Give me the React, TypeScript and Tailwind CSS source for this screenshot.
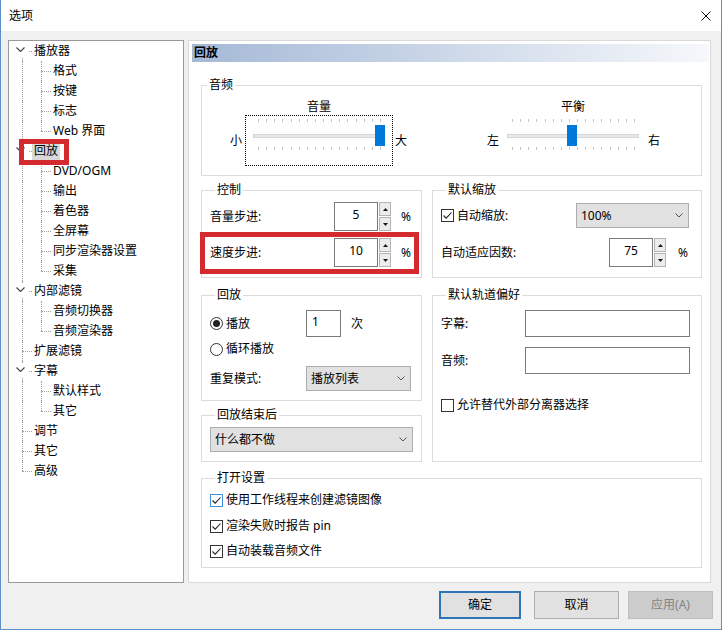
import { clsx } from "clsx";
import type { ReactNode } from "react";

const cn = clsx;

type TreeItem = {
  label: string;
  level: 0 | 1;
  exp?: boolean;
  first?: boolean;
  last?: boolean;
  selected?: boolean;
};

const tree: TreeItem[] = [
  { label: "播放器", level: 0, exp: true, first: true },
  { label: "格式", level: 1 },
  { label: "按键", level: 1 },
  { label: "标志", level: 1 },
  { label: "Web 界面", level: 1, last: true },
  { label: "回放", level: 0, exp: true, selected: true },
  { label: "DVD/OGM", level: 1 },
  { label: "输出", level: 1 },
  { label: "着色器", level: 1 },
  { label: "全屏幕", level: 1 },
  { label: "同步渲染器设置", level: 1 },
  { label: "采集", level: 1, last: true },
  { label: "内部滤镜", level: 0, exp: true },
  { label: "音频切换器", level: 1 },
  { label: "音频渲染器", level: 1, last: true },
  { label: "扩展滤镜", level: 0 },
  { label: "字幕", level: 0, exp: true },
  { label: "默认样式", level: 1 },
  { label: "其它", level: 1, last: true },
  { label: "调节", level: 0 },
  { label: "其它", level: 0 },
  { label: "高级", level: 0, last: true },
];

function TreeRow({ item }: { item: TreeItem }) {
  const dot = "absolute border-dotted border-[#a0a0a0]";
  return (
    <div className="flex h-[20px] items-center">
      <div className="relative h-full w-[23px] shrink-0">
        <span
          className={cn(
            dot,
            "left-[13px] border-l",
            item.level === 0 && item.first && "top-[10px] bottom-0",
            item.level === 0 && item.last && "top-0 bottom-[10px]",
            (item.level === 1 || (!item.first && !item.last)) && "top-0 bottom-0"
          )}
        />
        {item.level === 0 && (
          <span className={cn(dot, "left-[13px] top-[10px] w-[10px] border-t")} />
        )}
        {item.exp && (
          <span className="absolute left-[5px] top-[3px] flex h-[13px] w-[14px] items-center justify-center bg-white">
            <svg width="9" height="5" viewBox="0 0 9 5" className="-ml-[1px] -mt-[2px]">
              <polyline points="0.5,0.5 4.5,4.5 8.5,0.5" fill="none" stroke="#404040" strokeWidth="1.1" />
            </svg>
          </span>
        )}
      </div>
      {item.level === 1 && (
        <div className="relative h-full w-[19px] shrink-0">
          <span className={cn(dot, "left-[9px] top-0 border-l", item.last ? "bottom-[10px]" : "bottom-0")} />
          <span className={cn(dot, "left-[9px] top-[10px] w-[10px] border-t")} />
        </div>
      )}
      <span className={cn("whitespace-nowrap px-[2px] leading-[18px]", item.selected && "bg-[#d9d9d9]")}>
        {item.label}
      </span>
    </div>
  );
}

function Group({ title, className, children }: { title: string; className?: string; children?: ReactNode }) {
  return (
    <fieldset className={cn("border border-[#dcdcdc]", className)}>
      <legend className="ml-[5px] px-[2px] leading-[16px]">{title}</legend>
      {children}
    </fieldset>
  );
}

function Ticks() {
  return (
    <div className="ml-[12px] flex h-[3px] w-[123px] justify-between">
      {Array.from({ length: 16 }).map((_, i) => (
        <span key={i} className="h-[3px] w-[1px] bg-[#c4c4c4]" />
      ))}
    </div>
  );
}

function Slider({ focus, thumbClass }: { focus?: boolean; thumbClass: string }) {
  return (
    <div
      className={cn(
        "relative h-[51px] w-[148px] border border-dotted pt-[3px]",
        focus ? "border-black" : "border-transparent"
      )}
    >
      <Ticks />
      <div className="ml-[7px] mt-[12px] h-[4px] w-[132px] border border-[#d6d6d6] bg-[#e7eaea]" />
      <div className="mt-[9px]">
        <Ticks />
      </div>
      <div className={cn("absolute top-[9px] h-[21px] w-[10px] bg-[#0078d7]", thumbClass)} />
    </div>
  );
}

function Tri({ up }: { up?: boolean }) {
  return (
    <svg width="5" height="3" viewBox="0 0 5 3">
      <polygon points={up ? "0,3 5,3 2.5,0" : "0,0 5,0 2.5,3"} fill="#1a1a1a" />
    </svg>
  );
}

function Spin({ value }: { value: string }) {
  return (
    <div className="flex h-[29px] shrink-0">
      <div className="flex w-[44px] items-center justify-center border border-[#7a7a7a] bg-white pb-[3px]">
        {value}
      </div>
      <div className="ml-[1px] flex w-[12px] flex-col gap-[1px]">
        <div className="flex flex-1 items-center justify-center border border-[#b4b4b4] bg-[#ececec]">
          <Tri up />
        </div>
        <div className="flex flex-1 items-center justify-center border border-[#b4b4b4] bg-[#ececec]">
          <Tri />
        </div>
      </div>
    </div>
  );
}

function Combo({ text, className }: { text: string; className: string }) {
  return (
    <div
      className={cn(
        "flex h-[25px] shrink-0 items-center justify-between border border-[#adadad] bg-[#e1e1e1] pl-[4px] pr-[5px]",
        className
      )}
    >
      <span className="leading-[16px]">{text}</span>
      <svg width="8" height="5" viewBox="0 0 8 5">
        <polyline points="0.5,0.5 4,4 7.5,0.5" fill="none" stroke="#555" strokeWidth="1" />
      </svg>
    </div>
  );
}

function Check({ checked, focus }: { checked?: boolean; focus?: boolean }) {
  return (
    <span
      className={cn(
        "flex h-[13px] w-[13px] shrink-0 items-center justify-center border bg-white",
        focus ? "border-[#3c8fd8]" : "border-[#333333]"
      )}
    >
      {checked && (
        <svg width="11" height="11" viewBox="0 0 11 11">
          <path d="M1.5 5.5 L4.2 8.2 L9.5 2.5" fill="none" stroke="#222" strokeWidth="1.1" />
        </svg>
      )}
    </span>
  );
}

function Radio({ checked }: { checked?: boolean }) {
  return (
    <span className="flex h-[13px] w-[13px] shrink-0 items-center justify-center rounded-full border border-[#333333] bg-white">
      {checked && <span className="h-[7px] w-[7px] rounded-full bg-[#222]" />}
    </span>
  );
}

export default function App() {
  return (
    <div className="flex h-[630px] w-[722px] flex-col border-x border-b border-[#5b8fc7] bg-[#f0f0f0] text-[12px] leading-[16px] text-black font-[family-name:'Noto_Sans','Noto_Sans_CJK_SC',sans-serif]">
      {/* title bar */}
      <div className="flex h-[31px] shrink-0 items-center justify-between bg-white pl-[8px] pr-[10px]">
        <span className="leading-[16px]">选项</span>
        <svg width="10" height="10" viewBox="0 0 10 10">
          <path d="M0.5 0.5 L9.5 9.5 M9.5 0.5 L0.5 9.5" stroke="#111" strokeWidth="1" />
        </svg>
      </div>

      <div className="flex flex-1 flex-col pl-[7px] pr-[10px] pt-[9px]">
        <div className="flex h-[543px] gap-[4px]">
          {/* tree */}
          <div className="relative w-[176px] shrink-0 border border-[#9a9a9a] bg-white">
            {tree.map((item, i) => (
              <TreeRow key={i} item={item} />
            ))}
            <div className="absolute left-[10px] top-[98px] h-[26px] w-[50px] border-[5px] border-[#d42a2f]" />
          </div>

          {/* page */}
          <div className="flex flex-1 flex-col border border-[#d9d9d9] bg-white">
            <div className="ml-[3px] mr-[1px] mt-[3px] h-[18px] bg-linear-to-r from-[#a5b9d6] to-[#f6f8fb] pl-[2px] font-bold leading-[18px]">
              回放
            </div>

            <div className="ml-[12px] mr-[8px] mt-[15px] flex flex-col">
              <Group title="音频" className="pb-[9px] pt-[6px]">
                <div className="flex">
                  <div className="ml-[28px] flex flex-col">
                    <span className="ml-[15px] w-[148px] text-center">音量</span>
                    <div className="flex items-center">
                      <span className="w-[12px] text-center">小</span>
                      <div className="ml-[3px]">
                        <Slider focus thumbClass="left-[129px]" />
                      </div>
                      <span className="ml-[2px] w-[12px] text-center">大</span>
                    </div>
                  </div>
                  <div className="ml-[80px] flex flex-col">
                    <span className="ml-[12px] w-[148px] text-center">平衡</span>
                    <div className="flex items-center">
                      <span className="w-[12px] text-center">左</span>
                      <Slider thumbClass="left-[67px]" />
                      <span className="ml-[1px] w-[12px] text-center">右</span>
                    </div>
                  </div>
                </div>
              </Group>

              <div className="mt-[6px] flex gap-[10px]">
                <Group title="控制" className="w-[221px] shrink-0 pb-[10px] pl-[8px] pt-[4px]">
                  <div className="flex h-[29px] items-center">
                    <span className="w-[124px]">音量步进:</span>
                    <Spin value="5" />
                    <span className="ml-[10px]">%</span>
                  </div>
                  <div className="relative mt-[7px] flex h-[29px] items-center">
                    <span className="w-[124px]">速度步进:</span>
                    <Spin value="10" />
                    <span className="ml-[10px]">%</span>
                    <div className="absolute -left-[10px] -top-[6px] h-[42px] w-[219px] border-[5px] border-[#d42a2f]" />
                  </div>
                </Group>

                <Group title="默认缩放" className="flex-1 pb-[10px] pl-[8px] pr-[12px] pt-[5px]">
                  <div className="flex h-[25px] items-center justify-between">
                    <div className="flex items-center gap-[3px]">
                      <Check checked />
                      <span>自动缩放:</span>
                    </div>
                    <Combo text="100%" className="w-[113px]" />
                  </div>
                  <div className="mt-[10px] flex h-[29px] items-center">
                    <span className="w-[168px]">自动适应因数:</span>
                    <Spin value="75" />
                    <span className="ml-[12px]">%</span>
                  </div>
                </Group>
              </div>

              <div className="mt-[9px] flex gap-[10px]">
                <div className="flex w-[221px] shrink-0 flex-col">
                  <Group title="回放" className="pb-[9px] pl-[8px] pt-[7px]">
                    <div className="flex h-[27px] items-center">
                      <div className="flex w-[96px] items-center gap-[3px]">
                        <Radio checked />
                        <span>播放</span>
                      </div>
                      <div className="flex h-[27px] w-[35px] items-center border border-[#7a7a7a] bg-white pb-[3px] pl-[5px]">
                        1
                      </div>
                      <span className="ml-[10px]">次</span>
                    </div>
                    <div className="mt-[4px] flex h-[16px] items-center gap-[3px]">
                      <Radio />
                      <span>循环播放</span>
                    </div>
                    <div className="mt-[9px] flex h-[25px] items-center">
                      <span className="w-[96px]">重复模式:</span>
                      <Combo text="播放列表" className="w-[105px]" />
                    </div>
                  </Group>
                  <Group title="回放结束后" className="mt-[6px] pb-[9px] pl-[8px] pt-[4px]">
                    <Combo text="什么都不做" className="w-[203px]" />
                  </Group>
                </div>

                <Group title="默认轨道偏好" className="flex-1 pl-[8px] pt-[7px]">
                  <div className="flex h-[27px] items-center">
                    <span className="w-[84px]">字幕:</span>
                    <div className="h-[27px] w-[165px] border border-[#7a7a7a] bg-white" />
                  </div>
                  <div className="mt-[10px] flex h-[27px] items-center">
                    <span className="w-[84px]">音频:</span>
                    <div className="h-[27px] w-[165px] border border-[#7a7a7a] bg-white" />
                  </div>
                  <div className="mt-[23px] flex h-[16px] items-center gap-[3px]">
                    <Check />
                    <span>允许替代外部分离器选择</span>
                  </div>
                </Group>
              </div>

              <Group title="打开设置" className="mt-[8px] pb-[8px] pl-[8px] pt-[6px]">
                <div className="flex h-[16px] items-center gap-[3px]">
                  <Check checked focus />
                  <span>使用工作线程来创建滤镜图像</span>
                </div>
                <div className="mt-[10px] flex h-[16px] items-center gap-[3px]">
                  <Check checked />
                  <span>渲染失败时报告 pin</span>
                </div>
                <div className="mt-[9px] flex h-[16px] items-center gap-[3px]">
                  <Check checked />
                  <span>自动装载音频文件</span>
                </div>
              </Group>
            </div>
          </div>
        </div>

        {/* buttons */}
        <div className="-mr-[2px] mt-[8px] flex h-[28px] justify-end">
          <button className="w-[82px] border-2 border-[#2f74b5] bg-[#e1e1e1]">确定</button>
          <button className="ml-[13px] w-[85px] border border-[#adadad] bg-[#e1e1e1]">取消</button>
          <button className="ml-[9px] w-[85px] border border-[#bfbfbf] bg-[#cccccc] text-[#838383]">应用(A)</button>
        </div>
      </div>
    </div>
  );
}
